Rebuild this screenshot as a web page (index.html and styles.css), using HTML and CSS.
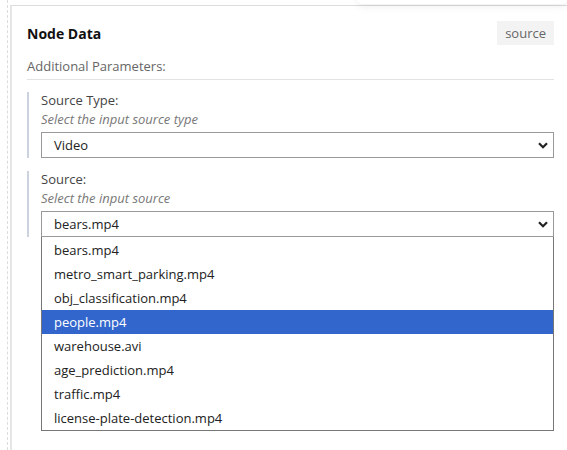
FILE: index.html
```html
<!DOCTYPE html>
<html lang="en">
<head>
    <meta charset="UTF-8">
    <meta name="viewport" content="width=device-width, initial-scale=1.0">
    <title>Node Data</title>
    <link rel="stylesheet" href="styles.css">
</head>
<body>
    <div class="canvas-edge"></div>
    <aside class="panel">
        <div class="panel-shadow"></div>
        <div class="panel-head">
            <h2>Node Data</h2>
            <span class="badge">source</span>
        </div>
        <div class="params-title">Additional Parameters:</div>

        <!-- Source type -->
        <div class="param">
            <label>Source Type:</label>
            <p class="hint">Select the input source type</p>
            <div class="select">
                <span>Video</span>
                <svg class="chevron" width="10" height="7" viewBox="0 0 10 7"><path d="M1 1.2 L5 5.2 L9 1.2" fill="none" stroke="#222" stroke-width="2.2"/></svg>
            </div>
        </div>

        <!-- Source -->
        <div class="param">
            <label>Source:</label>
            <p class="hint">Select the input source</p>
            <div class="select">
                <span>bears.mp4</span>
                <svg class="chevron" width="10" height="7" viewBox="0 0 10 7"><path d="M1 1.2 L5 5.2 L9 1.2" fill="none" stroke="#222" stroke-width="2.2"/></svg>
            </div>
            <ul class="options">
                <li>bears.mp4</li>
                <li>metro_smart_parking.mp4</li>
                <li>obj_classification.mp4</li>
                <li class="selected">people.mp4</li>
                <li>warehouse.avi</li>
                <li>age_prediction.mp4</li>
                <li>traffic.mp4</li>
                <li>license-plate-detection.mp4</li>
            </ul>
        </div>
    </aside>
</body>
</html>
```

FILE: styles.css
```css
/* Panel general */
body {
    margin: 0;
    font-family: 'Open Sans', sans-serif;
    font-size: 13px;
    color: #333;
    background: #fff;
    height: 450px;
    overflow: hidden;
    display: flex;
}

.canvas-edge {
    width: 7px;
    border-right: 1px dashed #dcdcdc;
    margin-right: 2px;
}

.panel {
    position: relative;
    flex: 1;
    border-left: 2px solid #e6e6e6;
    border-top: 1px solid #dcdcdc;
    margin-top: 5px;
    padding: 0 13px 0 15px;
}

.panel-shadow {
    position: absolute;
    top: -12px;
    left: 345px;
    right: 0;
    height: 10px;
    border-radius: 10px;
    box-shadow: 0 2px 8px rgba(0, 0, 0, 0.08);
}

.panel-head {
    display: flex;
    justify-content: space-between;
    align-items: center;
    margin-top: 15px;
}

.panel-head h2 {
    margin: 0;
    font-size: 14px;
    font-weight: bold;
    color: #111;
}

.badge {
    background: #f3f3f3;
    color: #666;
    padding: 4px 8px;
    line-height: 16px;
}

.params-title {
    color: #666;
    padding: 12px 0 4px;
    border-bottom: 1px solid #e2e2e2;
    line-height: 18px;
}

/* Parameters */
.param {
    position: relative;
    margin-top: 12px;
    padding-left: 12px;
    border-left: 2px solid #ccd3de;
}

.param + .param {
    margin-top: 13px;
}

.param label {
    display: block;
    color: #444;
    line-height: 17px;
}

.hint {
    margin: 2px 0 4px;
    font-style: italic;
    color: #777;
    line-height: 17px;
}

.select {
    display: flex;
    justify-content: space-between;
    align-items: center;
    height: 24px;
    padding: 0 5px 0 12px;
    border: 1px solid #999;
    color: #222;
}

.options {
    position: absolute;
    left: 12px;
    right: 0;
    top: 100%;
    margin: 0;
    padding: 1px 0 0;
    list-style: none;
    background: #fff;
    border: 1px solid #777;
    border-top: none;
}

.options li {
    height: 24px;
    line-height: 24px;
    padding-left: 12px;
    color: #222;
}

.options li.selected {
    background: #3366cc;
    color: #fff;
}
```
